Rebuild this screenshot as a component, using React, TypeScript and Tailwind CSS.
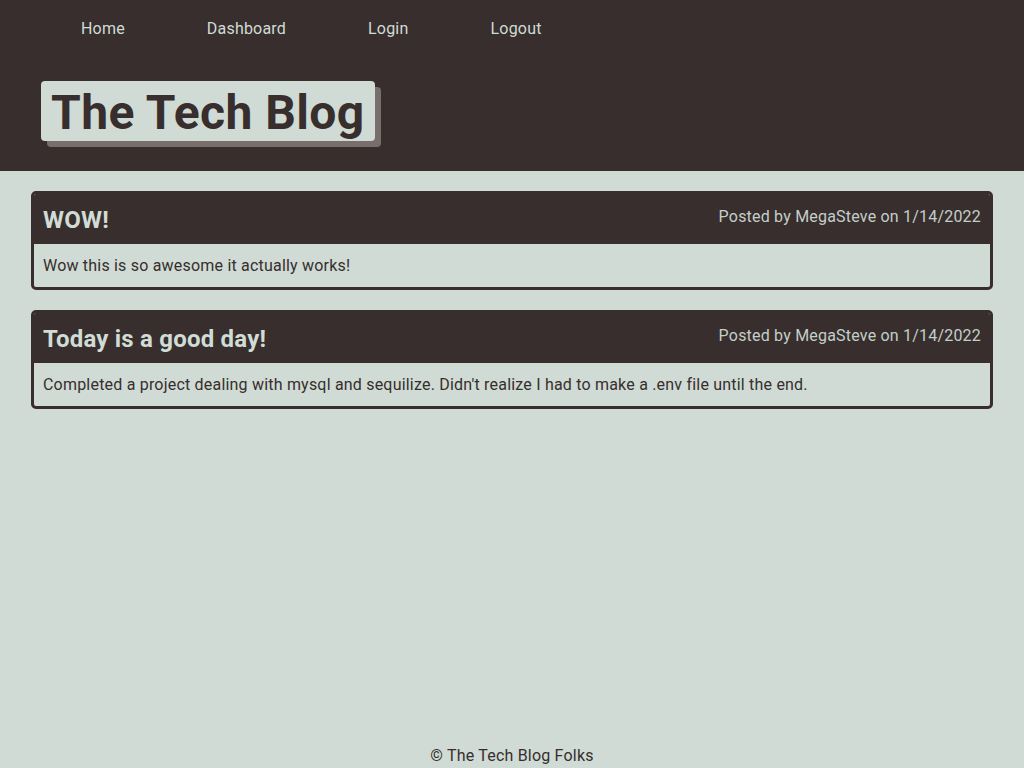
import React from "react";

const posts = [
  {
    title: "WOW!",
    author: "MegaSteve",
    date: "1/14/2022",
    body: "Wow this is so awesome it actually works!",
  },
  {
    title: "Today is a good day!",
    author: "MegaSteve",
    date: "1/14/2022",
    body: "Completed a project dealing with mysql and sequilize. Didn't realize I had to make a .env file until the end.",
  },
];

export default function App() {
  return (
    <div className="min-h-screen flex flex-col bg-[#cfdbd4] text-[#372e2d] font-['Roboto',sans-serif] tracking-[0.2px]">
      {/* Header */}
      <header className="bg-[#372e2d] h-[171px] flex flex-col">
        <nav className="flex items-center h-[58px] pl-[40px]">
          {["Home", "Dashboard", "Login", "Logout"].map((l) => (
            <a key={l} href="#" className="px-[41px] text-[16px] text-[#d0dcd5]">
              {l}
            </a>
          ))}
        </nav>
        <div className="pl-[41px] pt-[23px]">
          <h1 className="inline-block bg-[#cfdbd4] rounded-[4px] px-[10px] h-[60px] leading-[64px] text-[48px] font-bold tracking-[0.4px] text-[#372e2d] shadow-[6px_6px_0_#786f6d]">
            The Tech Blog
          </h1>
        </div>
      </header>

      {/* Posts */}
      <main className="flex-1 flex flex-col gap-[20px] px-[31px] pt-[20px]">
        {posts.map((p) => (
          <article key={p.title} className="border-[3px] border-[#372e2d] rounded-[5px] overflow-hidden">
            <div className="bg-[#372e2d] h-[50px] flex items-center justify-between px-[9px]">
              <h2 className="text-[24px] font-bold text-[#d0dcd5] pt-[2px]">{p.title}</h2>
              <span className="text-[16px] text-[#c4cfc9] pb-[4px]">
                Posted by {p.author} on {p.date}
              </span>
            </div>
            <p className="h-[43px] flex items-center px-[9px] text-[16px] text-[#372e2d]">{p.body}</p>
          </article>
        ))}
      </main>

      <footer className="h-[24px] flex items-center justify-center text-[16px] text-[#372e2d]">
        © The Tech Blog Folks
      </footer>
    </div>
  );
}
